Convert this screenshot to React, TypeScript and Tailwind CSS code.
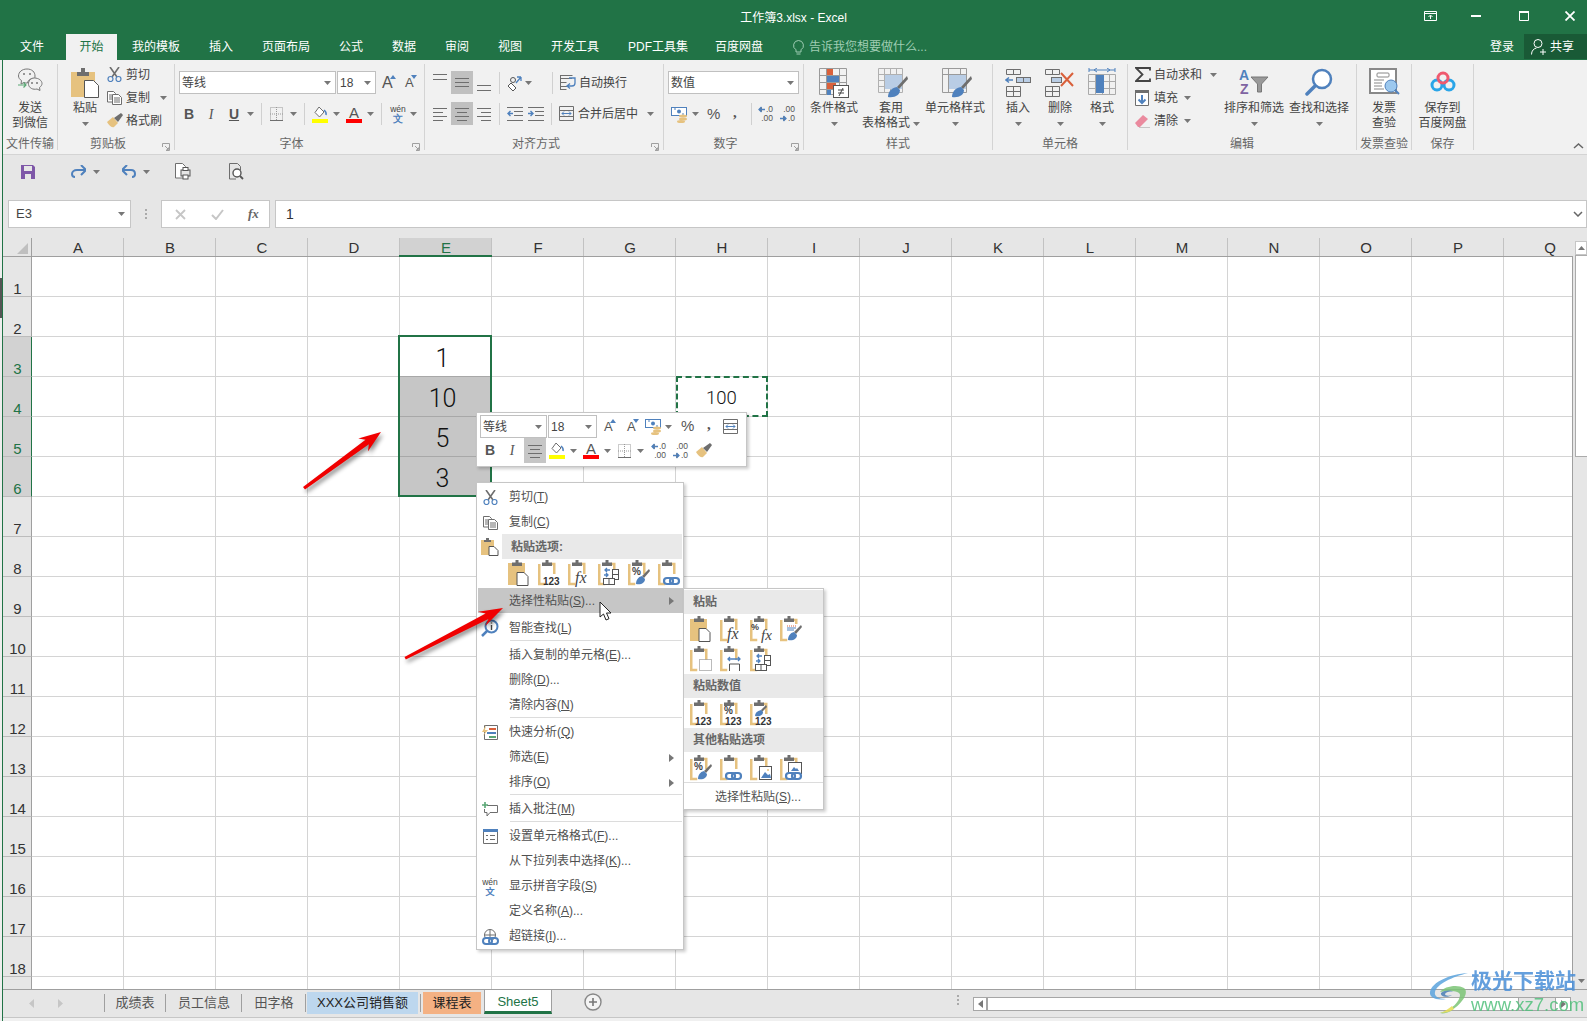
import React from "react";

const G = "#6e6e6e", B = "#4f81bd", T = "#e6c27f", O = "#d9603b", LB = "#b9cde5";

const S = ({ w, h, children, className = "" }: { w: number; h: number; children?: React.ReactNode; className?: string }) => (
  <svg width={w} height={h} viewBox={`0 0 ${w} ${h}`} fill="none" className={`shrink-0 ${className}`}>{children}</svg>
);

const Caret = ({ className = "" }: { className?: string }) => (
  <svg width="7" height="4" viewBox="0 0 7 4" className={`shrink-0 ${className}`}><path d="M0 0h7L3.5 4z" fill="#777" /></svg>
);
const VSep = ({ className = "" }: { className?: string }) => <div className={`w-[1px] h-[22px] bg-[#d0d0d0] shrink-0 ${className}`} />;

const Lines = ({ w, h, rows, className = "" }: { w: number; h: number; rows: [number, number, number][]; className?: string }) => (
  <S w={w} h={h} className={className}>{rows.map(([x1, x2, y], i) => <path key={i} d={`M${x1} ${y + 0.5}H${x2}`} stroke={G} />)}</S>
);

const FontUp = ({ small, up = true, className = "" }: { small?: boolean; up?: boolean; className?: string }) => (
  <span className={`relative flex shrink-0 items-end font-['Liberation_Sans'] text-[#555] ${small ? "text-[13px] w-[12px]" : "text-[16px] w-[14px]"} h-[18px] leading-[18px] ${className}`}>
    A
    <svg width="6" height="4" viewBox="0 0 6 4" className="absolute right-0 top-[1px]"><path d={up ? "M0 4h6L3 0z" : "M0 0h6L3 4z"} fill={B} /></svg>
  </span>
);

const Borders = ({ className = "" }: { className?: string }) => (
  <S w={13} h={14} className={className}><path d="M.5 .5h12v13H.5zM6.5 0v14M0 7h13" stroke="#999" strokeDasharray="1 1" /><path d="M0 13.5h13" stroke={G} /></S>
);
const Fill = ({ className = "" }: { className?: string }) => (
  <S w={16} h={17} className={className}>
    <path d="M7 1l5 5-4.500 5L3 6.500z" fill="#fff" stroke={G} /><path d="M12 4c2 1.500 2.500 3 2 5" stroke={B} strokeWidth="1.500" />
    <rect x="0" y="13" width="16" height="4" fill="#ffff00" />
  </S>
);
const FontColor = ({ className = "" }: { className?: string }) => (
  <span className={`flex flex-col items-center w-[16px] shrink-0 ${className}`}>
    <span className="font-['Liberation_Sans'] text-[15px] leading-[13px] h-[13px] text-[#555]">A</span>
    <span className="w-[16px] h-[4px] bg-[#ff0000]" />
  </span>
);
const Wen = ({ className = "" }: { className?: string }) => (
  <span className={`flex flex-col items-center w-[16px] shrink-0 leading-[9px] ${className}`}>
    <span className="text-[8.500px] text-[#444] font-['Liberation_Sans']">wén</span>
    <span className="text-[9.500px] text-[#4f81bd] font-bold">文</span>
  </span>
);
const Account = ({ className = "" }: { className?: string }) => (
  <S w={17} h={17} className={className}>
    <rect x=".5" y="1.500" width="15" height="8" fill="#fff" stroke={B} /><circle cx="8" cy="5.500" r="2" fill={B} />
    <path d="M3 3h2M11 8h2" stroke={B} />
    <ellipse cx="12" cy="10" rx="4" ry="1.500" fill={T} /><ellipse cx="12" cy="13" rx="4" ry="1.500" fill={T} /><ellipse cx="10" cy="15.500" rx="4" ry="1.500" fill={T} />
  </S>
);
const DecA = ({ className = "" }: { className?: string }) => (
  <span className={`relative flex flex-col items-end w-[15px] h-[18px] shrink-0 font-['Liberation_Sans'] text-[8.500px] leading-[8px] text-[#555] ${className}`}>
    <span>.0</span><span className="mt-[1px]">.00</span>
    <svg width="7" height="7" viewBox="0 0 7 7" className="absolute left-0 top-[1px]"><path d="M7 3.500H1M3.500 1L1 3.500 3.500 6" stroke={B} strokeWidth="1.300" /></svg>
  </span>
);
const DecB = ({ className = "" }: { className?: string }) => (
  <span className={`relative flex flex-col items-end w-[15px] h-[18px] shrink-0 font-['Liberation_Sans'] text-[8.500px] leading-[8px] text-[#555] ${className}`}>
    <span>.00</span><span className="mt-[1px]">.0</span>
    <svg width="7" height="7" viewBox="0 0 7 7" className="absolute left-0 bottom-[1px]"><path d="M0 3.500h6M3.500 1L6 3.500 3.500 6" stroke={B} strokeWidth="1.300" /></svg>
  </span>
);
const Brush = ({ className = "" }: { className?: string }) => (
  <S w={16} h={15} className={className}>
    <path d="M0 9l6-5 5 6-4 4c-3 1-5-2-7-5z" fill={T} /><path d="M7 5l7-5 2 2-5 7z" fill={G} />
  </S>
);
const Scissors = ({ className = "" }: { className?: string }) => (
  <S w={15} h={15} className={className}>
    <path d="M3 0l7 10M12 0L5 10" stroke={G} strokeWidth="1.600" />
    <circle cx="3.500" cy="12" r="2.500" stroke={B} strokeWidth="1.200" /><circle cx="11.500" cy="12" r="2.500" stroke={B} strokeWidth="1.200" />
  </S>
);
const Copy = ({ className = "" }: { className?: string }) => (
  <S w={15} h={14} className={className}>
    <path d="M.5 .5h6l2 2V11H.5z" fill="#fff" stroke={G} /><path d="M5.500 3.500h6l3 3v7h-9z" fill="#fff" stroke={G} />
    <path d="M7 7h6M7 9h6M7 11h6M2 4h3M2 6h3M2 8h3" stroke={G} />
  </S>
);
const MergeIcon = ({ className = "" }: { className?: string }) => (
  <S w={15} h={15} className={className}>
    <path d="M.5 .5h14v14H.5zM0 4.500h15M0 10.500h15" stroke={G} /><path d="M3 7.500h9M5 5.500l-2 2 2 2M10 5.500l2 2-2 2" stroke={B} />
  </S>
);
const WrapIcon = ({ className = "" }: { className?: string }) => (
  <S w={16} h={15} className={className}>
    <path d="M.5 .5h12M.5 7.500h6M.5 14.500h6M.5 0v15" stroke={G} /><path d="M1 3.500h11M1 11.500h6" stroke={G} />
    <path d="M9 3h6v5c0 2-1 3-3 3H8M10 8.500l-3 2.500 3 2.500" stroke={B} strokeWidth="1.300" />
  </S>
);
const Indent = ({ dir, className = "" }: { dir: number; className?: string }) => (
  <S w={16} h={14} className={className}>
    <path d="M0 .5h16M7 4.500h9M7 8.500h9M0 13.500h16" stroke={G} />
    <path d={dir < 0 ? "M6 6.500H1M3.500 4L1 6.500 3.500 9" : "M0 6.500h5M2.500 4L5 6.500 2.500 9"} stroke={B} strokeWidth="1.400" />
  </S>
);

/* clipboard family */
const Clip = ({ solid, children }: { solid?: boolean; children?: React.ReactNode }) => (
  <S w={22} h={26} className="overflow-visible -mt-[1px]">
    {solid ? <rect x="0" y="3" width="17" height="22" fill={T} /> : <path d="M1.250 4v20h6M13 4h3.250v10" stroke={T} strokeWidth="2.500" />}
    <path d="M4 2.500h3.500V0h3v2.500H14V6H4z" fill={G} />
    {children}
  </S>
);
const Page = () => <path d="M9 12.500h7l4 4v9H9z" fill="#fff" stroke="#555" />;
const N123 = () => <text x="5" y="25" fontSize="10" fontWeight="700" fill="#333" fontFamily="Liberation Sans">123</text>;
const Fx = ({ x = 7, y = 23, size = 16 }: { x?: number; y?: number; size?: number }) => <text x={x} y={y} fontSize={size} fontStyle="italic" fill="#444" fontFamily="Liberation Serif">fx</text>;
const Pct = ({ y = 15, x = 4, size = 10 }: { y?: number; x?: number; size?: number }) => <text x={x} y={y} fontSize={size} fontWeight="700" fill="#444" fontFamily="Liberation Sans">%</text>;
const SwapA = () => (
  <g><path d="M7 10h5M15 10h0M9 8l-2 2 2 2M6 15l4 0M8 13l2 2-2 2" stroke={B} strokeWidth="1.300" /><rect x="14.500" y="9.500" width="6" height="10" fill="#fff" stroke="#555" /><path d="M14.500 14.500h6" stroke="#555" /><rect x="5.500" y="18.500" width="11" height="6" fill="#fff" stroke="#555" /><path d="M11 18v7" stroke="#555" /></g>
);
const PBrush = () => <g><path d="M21 9l-7 7 2 2 6-7z" fill={G} /><path d="M8 24c0-4 2-7 6-8l3 3c0 4-4 6-9 5z" fill={B} /></g>;
const Link = () => <g stroke={B} strokeWidth="2.200"><rect x="6" y="18" width="9" height="6" rx="3" /><rect x="12" y="18" width="9" height="6" rx="3" /></g>;
const Pic = () => <g><rect x="9.500" y="11.500" width="12" height="13" fill="#fff" stroke="#555" /><path d="M11 23l4-6 3 3 2-1 1 4z" fill={B} /><circle cx="18" cy="15" r="1" fill={T} /></g>;
const Dots = () => <rect x="9.500" y="13.500" width="12" height="11" fill="#fff" stroke="#777" strokeDasharray="1 1" />;
const Cols = () => <g><path d="M8 13h12M10 11l-2 2 2 2M18 11l2 2-2 2" stroke={B} strokeWidth="1.300" /><path d="M9.500 25v-7h10v7" stroke="#555" /></g>;
const Notes = () => <g><rect x="6" y="8" width="12" height="9" fill="#fff" /><path d="M7 10h9" stroke="#d9603b" strokeDasharray="1 1" /><path d="M7 12h9M7 14h7" stroke={B} /></g>;

const Paste = {
  keep: <Clip solid><Page /></Clip>,
  val: <Clip><N123 /></Clip>,
  fx: <Clip><Fx /></Clip>,
  swap: <Clip><SwapA /></Clip>,
  pctb: <Clip><Pct /><PBrush /></Clip>,
  link: <Clip><Link /></Clip>,
  pctfx: <Clip><Pct x={1} y={14} size={9} /><Fx x={11} y={24} size={15} /></Clip>,
  note: <Clip><Notes /><PBrush /></Clip>,
  dots: <Clip><Dots /></Clip>,
  cols: <Clip><Cols /></Clip>,
  pv: <Clip><Pct y={14} /><N123 /></Clip>,
  bv: <Clip><path d="M16 5l-5 5 1 2 5-5z" fill={G} /><path d="M5 16c0-3 2-5 6-6l2 2c0 3-3 5-8 4z" fill={B} /><N123 /></Clip>,
  pic: <Clip><Pic /></Clip>,
  piclink: <Clip><rect x="8.500" y="7.500" width="13" height="11" fill="#fff" stroke="#555" /><path d="M11 16l3-4 2 2 1-1 2 3z" fill={B} /><Link /></Clip>,
};

const Big = ({ className = "", icon, lines, caret = true, inline }: { className?: string; icon: React.ReactNode; lines: string[]; caret?: boolean; inline?: boolean }) => (
  <div className={`flex flex-col items-center shrink-0 ${className}`}>
    <div className="h-[37px] pt-[4px] flex justify-center items-start">{icon}</div>
    {lines.map((l, i) => (
      <div key={i} className="h-[15px] leading-[15px] whitespace-nowrap flex items-center">
        {l}{inline && i === 1 && <Caret className="ml-[3px]" />}
      </div>
    ))}
    {lines.length === 1 && caret && <div className="h-[15px] flex items-center"><Caret /></div>}
  </div>
);

const Launcher = () => (
  <div className="w-[16px] flex items-start pl-[4px] pt-[8px]">
    <svg width="8" height="8" viewBox="0 0 8 8"><path d="M.5 4V.5H7.500V7.500H4M3 3l3 3M4.500 6.500h2v-2" stroke="#a0a0a0" fill="none" /></svg>
  </div>
);

const Group = ({ className, label, launcher, children }: { className: string; label: string; launcher?: boolean; children: React.ReactNode }) => (
  <div className={`flex flex-col my-[4px] border-r border-[#d4d4d4] shrink-0 ${className}`}>
    <div className="h-[71px] flex flex-col">{children}</div>
    <div className="h-[15px] flex text-[#666]">
      <div className="flex-1 text-center leading-[15px] mt-[2px] whitespace-nowrap">{label}</div>
      {launcher && <Launcher />}
    </div>
  </div>
);

const Select = ({ text, className = "", caretClass = "" }: { text: string; className?: string; caretClass?: string }) => (
  <div className={`bg-white border border-[#c0c0c0] flex items-center justify-between pl-[2px] pr-[4px] shrink-0 text-[#444] ${className}`}>
    <span>{text}</span><Caret className={caretClass} />
  </div>
);

const Small = ({ icon, text, after }: { icon: React.ReactNode; text: string; after?: React.ReactNode }) => (
  <div className="flex items-center h-[23px]">
    <div className="w-[19px] shrink-0 flex">{icon}</div>
    <span className="whitespace-nowrap">{text}</span>
    {after}
  </div>
);

const Tab = ({ t, className, active }: { t: string; className: string; active?: boolean }) => (
  <div className={`flex items-center justify-center shrink-0 whitespace-nowrap ${active ? "bg-[#f1f1f1] text-[#217346]" : "text-white"} ${className}`}>{t}</div>
);

const Title = () => (
  <div className="h-[60px] bg-[#217346] flex flex-col shrink-0">
    <div className="h-[34px] grid grid-cols-[1fr_auto_1fr] items-start text-white">
      <div />
      <div className="leading-[36px] text-[12px]">工作簿3.xlsx - Excel</div>
      <div className="flex justify-end items-center pr-[12px] h-[32px]">
        <S w={13} h={10}><path d="M.5 .5h12v9H.5zM0 2.500h13M6.500 8V4.500M4.500 6l2-2 2 2" stroke="#fff" /></S>
        <S w={10} h={2} className="ml-[34px]"><rect width="10" height="2" fill="#fff" /></S>
        <S w={10} h={10} className="ml-[38px]"><path d="M.5 .5h9v9h-9z" stroke="#fff" /><rect width="10" height="2" fill="#fff" /></S>
        <S w={10} h={10} className="ml-[36px]"><path d="M.5 .5l9 9M9.500 .5l-9 9" stroke="#fff" strokeWidth="1.800" /></S>
      </div>
    </div>
    <div className="h-[26px] flex">
      <Tab t="文件" className="w-[66px] pr-[2px]" />
      <Tab t="开始" className="w-[51px]" active />
      <Tab t="我的模板" className="w-[78px]" />
      <Tab t="插入" className="w-[52px]" />
      <Tab t="页面布局" className="w-[78px]" />
      <Tab t="公式" className="w-[52px]" />
      <Tab t="数据" className="w-[54px]" />
      <Tab t="审阅" className="w-[52px]" />
      <Tab t="视图" className="w-[54px]" />
      <Tab t="开发工具" className="w-[76px]" />
      <Tab t="PDF工具集" className="w-[90px]" />
      <Tab t="百度网盘" className="w-[72px]" />
      <S w={11} h={15} className="ml-[18px] mt-[6px]"><path d="M5.500 .5a5 5 0 0 1 2.500 9.300V12H3V9.800A5 5 0 0 1 5.500 .5zM3.500 14h4" stroke="#9fcdb3" /></S>
      <div className="ml-[5px] text-[#9fcdb3] leading-[26px]">告诉我您想要做什么...</div>
      <div className="ml-auto text-white leading-[26px]">登录</div>
      <div className="ml-[10px] w-[63px] h-[25px] bg-[#195a36] flex items-center pl-[7px] text-white">
        <S w={15} h={16}><circle cx="7" cy="4.500" r="4" stroke="#fff" /><path d="M.5 15.500c0-4 2.500-6 5-6.500M9 13h6M12 10v6" stroke="#fff" /></S>
        <span className="ml-[4px]">共享</span>
      </div>
    </div>
  </div>
);

const Ribbon = () => (
  <div className="h-[95px] flex bg-[#f1f1f1] border-b border-[#d4d4d4] shrink-0 text-[#444]">
    <Group className="w-[55px]" label="文件传输">
      <Big className="w-[54px]" caret={false} lines={["发送", "到微信"]} icon={
        <S w={25} h={23}>
          <path d="M9 1c5 0 8 3 8 7 0 1-.2 2-.6 2.600C13 10 10 12 9.500 15 8.500 15.200 7 15 6 14.500L3 16l.5-3.500C1.500 11.500 .5 9.500 .5 8 .5 4 4 1 9 1z" stroke="#777" />
          <path d="M16.500 10c4 0 7.500 2.500 7.500 5.500 0 1.500-1 3-2.500 4l.5 3-3-1.500c-4 1-8-1-8.500-4.500-.5-3.500 2.500-6.500 5.500-6.500z" fill="#f1f1f1" stroke="#777" />
          <circle cx="6" cy="6" r="1" fill="#777" /><circle cx="12" cy="6" r="1" fill="#777" /><circle cx="14" cy="15" r="1" fill="#777" /><circle cx="19" cy="15" r="1" fill="#777" />
          <path d="M0 17h8M5.500 14.500L8 17l-2.500 2.500" stroke="#5aa775" strokeWidth="1.200" />
        </S>
      } />
    </Group>
    <Group className="w-[117px]" label="剪贴板" launcher>
      <div className="flex">
        <Big className="w-[44px] ml-[5px]" lines={["粘贴"]} icon={
          <S w={28} h={30}>
            <rect x="0" y="4" width="24" height="25" fill={T} /><path d="M6 4h4V0h4v4h4v4H6z" fill={G} />
            <path d="M13.500 12.500h9l5 5v12h-14z" fill="#fff" stroke="#555" />
          </S>
        } />
        <div className="flex flex-col -mt-[1px]">
          <Small icon={<Scissors />} text="剪切" />
          <Small icon={<Copy />} text="复制" after={<Caret className="ml-[10px]" />} />
          <Small icon={<Brush />} text="格式刷" />
        </div>
      </div>
    </Group>
    <Group className="w-[250px]" label="字体" launcher>
      <div className="flex items-center h-[23px] mt-[7px]">
        <Select text="等线" className="w-[157px] h-[23px] ml-[4px]" />
        <Select text="18" className="w-[39px] h-[23px] ml-[1px]" />
        <FontUp className="ml-[6px]" />
        <FontUp small className="ml-[9px]" up={false} />
      </div>
      <div className="flex items-center h-[22px] mt-[9px] font-['Liberation_Sans']">
        <span className="w-[20px] ml-[4px] text-center font-bold text-[14px] text-[#555]">B</span>
        <span className="w-[20px] ml-[2px] text-center italic text-[14px] font-['Liberation_Serif'] text-[#555]">I</span>
        <span className="w-[20px] ml-[3px] text-center font-bold underline text-[14px] text-[#555]">U</span>
        <Caret className="ml-[3px]" />
        <VSep className="ml-[7px]" />
        <Borders className="ml-[8px]" />
        <Caret className="ml-[7px]" />
        <VSep className="ml-[7px]" />
        <Fill className="ml-[7px]" />
        <Caret className="ml-[5px]" />
        <FontColor className="ml-[6px]" />
        <Caret className="ml-[5px]" />
        <VSep className="ml-[7px]" />
        <Wen className="ml-[8px]" />
        <Caret className="ml-[4px]" />
      </div>
    </Group>
    <Group className="w-[239px]" label="对齐方式" launcher>
      <div className="flex items-center h-[23px] mt-[7px]">
        <Lines w={14} h={23} className="ml-[8px]" rows={[[0, 14, 3], [0, 14, 8]]} />
        <div className="w-[22px] h-[23px] ml-[4px] bg-[#c0c0c0] flex items-center justify-center"><Lines w={14} h={11} rows={[[0, 14, 1], [0, 14, 5], [0, 14, 9]]} /></div>
        <Lines w={14} h={23} className="ml-[4px]" rows={[[0, 14, 14], [0, 14, 19]]} />
        <VSep className="ml-[8px]" />
        <S w={16} h={17} className="ml-[7px]"><path d="M1 12l3-3 5 5-3 3z" fill="#fff" stroke="#555" /><circle cx="6" cy="6" r="2.500" stroke="#555" /><path d="M9 9l5-6M14 3h-4M14 3v4" stroke={B} strokeWidth="1.300" /></S>
        <Caret className="ml-[2px]" />
        <VSep className="ml-[20px]" />
        <WrapIcon className="ml-[7px]" />
        <span className="ml-[3px]">自动换行</span>
      </div>
      <div className="flex items-center h-[23px] mt-[8px]">
        <Lines w={14} h={14} className="ml-[8px]" rows={[[0, 14, 1], [0, 10, 5], [0, 14, 9], [0, 10, 13]]} />
        <div className="w-[22px] h-[23px] ml-[4px] bg-[#c0c0c0] flex items-center justify-center"><Lines w={14} h={14} rows={[[0, 14, 1], [2, 12, 5], [0, 14, 9], [2, 12, 13]]} /></div>
        <Lines w={14} h={14} className="ml-[4px]" rows={[[0, 14, 1], [4, 14, 5], [0, 14, 9], [4, 14, 13]]} />
        <VSep className="ml-[8px]" />
        <Indent dir={-1} className="ml-[7px]" />
        <Indent dir={1} className="ml-[5px]" />
        <VSep className="ml-[7px]" />
        <MergeIcon className="ml-[7px]" />
        <span className="ml-[4px]">合并后居中</span>
        <Caret className="ml-[9px]" />
      </div>
    </Group>
    <Group className="w-[140px]" label="数字" launcher>
      <div className="flex items-center h-[23px] mt-[7px]">
        <Select text="数值" className="w-[131px] h-[23px] ml-[4px]" />
      </div>
      <div className="flex items-center h-[22px] mt-[9px]">
        <Account className="ml-[7px]" />
        <Caret className="ml-[4px]" />
        <span className="ml-[8px] w-[13px] text-[15px] text-[#555] font-['Liberation_Sans']">%</span>
        <span className="ml-[13px] w-[5px] text-[15px] font-bold text-[#555] font-['Liberation_Serif'] -mt-[4px]">,</span>
        <VSep className="ml-[13px]" />
        <DecA className="ml-[6px]" />
        <DecB className="ml-[7px]" />
      </div>
    </Group>
    <Group className="w-[189px]" label="样式">
      <div className="flex">
        <Big className="w-[60px]" lines={["条件格式"]} icon={
          <S w={30} h={30}>
            <path d="M.5 .5h27v26H.5zM0 7.500h28M0 14.500h28M0 21.500h28M7.500 0v27M20.500 0v27" stroke="#9a9a9a" />
            <rect x="8" y="1" width="6" height="6" fill={O} /><rect x="8" y="8" width="12" height="6" fill={B} /><rect x="8" y="15" width="9" height="6" fill={O} /><rect x="8" y="22" width="4" height="5" fill={B} />
            <rect x="14.500" y="17.500" width="15" height="12" fill="#fff" stroke="#555" />
            <path d="M19 22h6M19 25h6M24 20l-4 8" stroke="#444" />
          </S>
        } />
        <Big className="w-[54px]" inline lines={["套用", "表格格式"]} icon={
          <S w={30} h={30} className="ml-[3px]">
            <path d="M.5 .5h24v24H.5zM0 6.500h25M0 12.500h25M0 18.500h25M6.500 0v25M12.500 0v25M18.500 0v25" stroke="#b0b0b0" />
            <rect x="7" y="7" width="17" height="14" fill={LB} />
            <path d="M29 8l-10 11 2 2 9-10z" fill={G} /><path d="M10 29c0-5 3-9 9-10l3 3c0 5-5 8-12 7z" fill={B} />
          </S>
        } />
        <Big className="w-[74px]" lines={["单元格样式"]} icon={
          <S w={30} h={30} className="ml-[3px]">
            <path d="M.5 .5h24v24H.5zM0 6.500h25M6.500 0v25M18.500 0v25" stroke="#9a9a9a" />
            <rect x="7" y="7" width="17" height="14" fill={LB} />
            <path d="M29 8l-10 11 2 2 9-10z" fill={G} /><path d="M10 29c0-5 3-9 9-10l3 3c0 5-5 8-12 7z" fill={B} />
          </S>
        } />
      </div>
    </Group>
    <Group className="w-[135px]" label="单元格">
      <div className="flex">
        <Big className="w-[50px]" lines={["插入"]} icon={
          <S w={27} h={30}>
            <path d="M1.500 1.500h14v5h-14zM8.500 1v6M1.500 18.500h14v10h-14zM8.500 18v11M1 23.500h15" stroke={G} />
            <rect x="11.500" y="9.500" width="14" height="5" fill={LB} stroke={G} /><path d="M18.500 9v6" stroke={G} />
            <path d="M8 12H1M4 9.500L1 12l3 2.500" stroke={B} strokeWidth="1.500" />
          </S>
        } />
        <Big className="w-[34px]" lines={["删除"]} icon={
          <S w={30} h={30}>
            <path d="M.5 1.500h14v5H.5zM7.500 1v6M.5 18.500h14v10H.5zM7.500 18v11M0 23.500h15" stroke={G} />
            <rect x="6.500" y="9.500" width="10" height="5" fill={LB} stroke={G} />
            <path d="M16 5l12 13M28 5L16 18" stroke={O} strokeWidth="2" />
          </S>
        } />
        <Big className="w-[50px]" lines={["格式"]} icon={
          <S w={29} h={30}>
            <path d="M1 2h26M1 0v4M27 0v4M6 2l3-2M6 2l3 2M22 2l-3-2M22 2l-3 2" stroke={B} />
            <path d="M.5 6.500h27v20H.5zM0 13.500h28M0 20.500h28M7.500 6v21M14.500 6v21M21.500 6v21" stroke="#aaa" />
            <rect x="8" y="7" width="8" height="18" fill={B} />
          </S>
        } />
      </div>
    </Group>
    <Group className="w-[229px]" label="编辑">
      <div className="flex">
        <div className="w-[96px] pl-[7px] flex flex-col shrink-0 -mt-[1px]">
          <Small text="自动求和" after={<Caret className="ml-[8px]" />} icon={<S w={16} h={15}><path d="M15 3.500V1H1l6.500 6.500L1 14h14v-2.500" stroke="#444" strokeWidth="1.800" /></S>} />
          <Small text="填充" after={<Caret className="ml-[6px]" />} icon={<S w={15} h={16}><path d="M.5 .5h13v15H.5z" fill="#fff" stroke={G} /><rect x="0" y="0" width="14" height="3" fill={G} /><path d="M7 5v8M3.500 9.500L7 13l3.500-3.500" stroke={B} strokeWidth="2" /></S>} />
          <Small text="清除" after={<Caret className="ml-[6px]" />} icon={<S w={15} h={14}><path d="M0 9l8-8 5 4-8 8H3z" fill="#ea8a9e" /><path d="M4 14h11" stroke="#999" /></S>} />
        </div>
        <Big className="w-[60px]" lines={["排序和筛选"]} icon={
          <S w={30} h={31}>
            <text x="0" y="12" fontSize="14" fontWeight="700" fill={B} fontFamily="Liberation Sans">A</text>
            <text x="1" y="26" fontSize="14" fontWeight="700" fill="#8064a2" fontFamily="Liberation Sans">Z</text>
            <path d="M12 9h17l-6.500 7v8h-4v-8z" fill="#999" stroke="#777" />
          </S>
        } />
        <Big className="w-[60px] ml-[5px]" lines={["查找和选择"]} icon={
          <S w={28} h={28}>
            <circle cx="17" cy="11" r="9" fill="#fff" stroke={B} strokeWidth="2.500" />
            <path d="M10 18L2 26" stroke={B} strokeWidth="3.500" strokeLinecap="round" />
          </S>
        } />
      </div>
    </Group>
    <Group className="w-[55px]" label="发票查验">
      <Big className="w-[54px]" caret={false} lines={["发票", "查验"]} icon={
        <S w={31} h={28}>
          <rect x="1" y="1" width="26" height="24" fill="#fff" stroke="#888" strokeWidth="2" />
          <rect x="8" y="5" width="12" height="4" rx="1" stroke="#888" /><path d="M5 12h10M5 15h8M5 18h8M5 21h10" stroke="#888" />
          <circle cx="22" cy="18" r="6" fill="#9cc8ee" stroke={B} /><path d="M26 22l4 4" stroke={B} strokeWidth="2" />
        </S>
      } />
    </Group>
    <Group className="w-[62px]" label="保存">
      <Big className="w-[61px]" caret={false} lines={["保存到", "百度网盘"]} icon={
        <S w={26} h={22} className="mt-[3px]">
          <circle cx="7" cy="14" r="5" stroke="#2aa5e8" strokeWidth="3" /><circle cx="19" cy="14" r="5" stroke="#2aa5e8" strokeWidth="3" />
          <circle cx="13" cy="7" r="5" stroke="#ef5a6f" strokeWidth="3" />
        </S>
      } />
    </Group>
    <svg width="11" height="6" viewBox="0 0 11 6" className="ml-auto mr-[3px] mt-[83px]"><path d="M1 5l4.500-4L10 5" stroke="#666" strokeWidth="1.500" fill="none" /></svg>
  </div>
);

const Quick = () => (
  <div className="h-[45px] flex items-center bg-[#e6e6e6] shrink-0 pb-[12px]">
    <S w={14} h={14} className="ml-[18px]"><path d="M0 0h12l2 2v12H0z" fill="#7e57a8" /><rect x="3" y="1" width="8" height="5" fill="#e6e6e6" /><rect x="4" y="9" width="6" height="5" fill="#e6e6e6" /></S>
    <S w={15} h={13} className="ml-[36px]"><path d="M14 5H6C3 5 1 7 1 9s1 3 3 3" stroke={B} strokeWidth="2" /><path d="M10 0l5 5-5 5" stroke={B} strokeWidth="2" /></S>
    <Caret className="ml-[7px]" />
    <S w={14} h={13} className="ml-[22px]"><path d="M1 5h8c3 0 4 2 4 4s-1 3-3 3" stroke={B} strokeWidth="2" /><path d="M5 0L0 5l5 5" stroke={B} strokeWidth="2" /></S>
    <Caret className="ml-[7px]" />
    <S w={16} h={17} className="ml-[25px]"><path d="M.5 .5h7l3 3V15H.5z" fill="#fff" stroke={G} /><rect x="6" y="7" width="9" height="6" fill="#e6e6e6" stroke="#555" /><rect x="8" y="4.500" width="5" height="3" fill="#fff" stroke="#555" /><rect x="8" y="12" width="5" height="4" fill="#fff" stroke="#555" /></S>
    <S w={15} h={17} className="ml-[38px]"><path d="M.5 .5h8l3 3V7M.5 .5V16H7" stroke={G} /><circle cx="8" cy="10" r="4" fill="#fff" stroke="#555" strokeWidth="1.400" /><path d="M11 13l3 3" stroke="#555" strokeWidth="1.800" /></S>
  </div>
);

const Formula = () => (
  <div className="h-[28px] flex items-stretch bg-[#e6e6e6] shrink-0">
    <div className="w-[123px] ml-[5px] bg-white border border-[#c6c6c6] flex items-center justify-between pl-[7px] pr-[5px] text-[13px] text-[#444]">E3<Caret /></div>
    <div className="flex flex-col gap-[2px] justify-center ml-[14px] w-[2px]">
      <span className="h-[2px] bg-[#aaa]" /><span className="h-[2px] bg-[#aaa]" /><span className="h-[2px] bg-[#aaa]" />
    </div>
    <div className="w-[109px] ml-[14px] bg-white border border-[#c6c6c6] flex items-center">
      <S w={11} h={11} className="ml-[13px]"><path d="M1 1l9 9M10 1l-9 9" stroke="#c6c6c6" strokeWidth="1.800" /></S>
      <S w={13} h={11} className="ml-[25px]"><path d="M1 6l4 4 7-9" stroke="#c6c6c6" strokeWidth="2" /></S>
      <span className="ml-[24px] italic font-['Liberation_Serif'] text-[13px] font-bold text-[#666]">fx</span>
    </div>
    <div className="flex-1 ml-[5px] bg-white border border-[#c6c6c6] flex items-center pl-[10px] pr-[3px] justify-between text-[14px] text-[#333]">
      1
      <svg width="10" height="6" viewBox="0 0 10 6"><path d="M1 1l4 4 4-4" stroke="#666" strokeWidth="1.500" fill="none" /></svg>
    </div>
  </div>
);

const COLS = "ABCDEFGHIJKLMNOPQ".split("");
const ROWS = Array.from({ length: 19 }, (_, i) => i + 1);

const ColumnHeader = () => (
  <div className="h-[19px] flex border-b border-[#9f9f9f] shrink-0 overflow-hidden">
    <div className="w-[29px] shrink-0 border-r border-[#9f9f9f] flex justify-end items-end pr-[3px] pb-[2px]">
      <svg width="11" height="11" viewBox="0 0 11 11"><path d="M11 0v11H0z" fill="#bfbfbf" /></svg>
    </div>
    {COLS.map((c) => (
      <div key={c} className={`w-[92px] shrink-0 border-r border-[#c2c2c2] text-center pl-[1px] text-[15px] leading-[20px] font-['Liberation_Sans'] ${c === "E" ? "bg-[#d2d2d2] text-[#217346]" : "text-[#333]"}`}>{c}</div>
    ))}
  </div>
);

const cellClass = (r: number, c: string) => {
  if (c === "E" && r >= 4 && r <= 6) return "bg-[#c6c6c6] border-b-[#a8a8a8] border-r-[#c6c6c6]";
  if (c === "E" && r === 3) return "bg-white border-b-[#a8a8a8] border-r-[#d4d4d4]";
  return "bg-white border-b-[#d4d4d4] border-r-[#d4d4d4]";
};
const values: Record<string, string> = { "E3": "1", "E4": "10", "E5": "5", "E6": "3" };

const Sheet = () => (
  <div className="flex-1 min-h-0 overflow-hidden border-r border-[#9f9f9f] font-['Roboto','Liberation_Sans']">
    {ROWS.map((r) => (
      <div key={r} className="flex h-[40px]">
        <div className={`w-[29px] shrink-0 border-b flex items-end justify-center pl-[1px] text-[15px] leading-[14px] font-['Liberation_Sans'] border-r ${r >= 3 && r <= 6 ? "bg-[#d2d2d2] text-[#217346] border-r-[#217346] border-b-[#bcbcbc]" : "text-[#333] border-r-[#9f9f9f] border-b-[#bcbcbc]"}`}>{r < 19 ? r : ""}</div>
        {COLS.map((c) => (
          <div key={c} className={`w-[92px] h-[40px] shrink-0 border-r border-b flex items-center justify-center font-light text-[#111] ${cellClass(r, c)} ${c === "E" ? "text-[25px] pr-[6px] pt-[4px]" : "text-[18.500px] pt-[5px]"}`}>{c === "H" && r === 4 ? "100" : values[c + r] ?? ""}</div>
        ))}
      </div>
    ))}
  </div>
);

const VScroll = () => (
  <div className="w-[12px] ml-[2px] flex flex-col mt-[3px] shrink-0">
    <div className="h-[14px] bg-white border border-[#c6c6c6] flex items-center justify-center"><svg width="7" height="4" viewBox="0 0 7 4"><path d="M0 4h7L3.500 0z" fill="#777" /></svg></div>
    <div className="h-[202px] bg-white border-y border-l border-[#ababab]" />
    <div className="flex-1" />
    <div className="h-[14px] flex items-center justify-center mb-[1px]"><Caret /></div>
  </div>
);

const SheetTab = ({ t, className }: { t: string; className: string }) => (
  <div className={`flex items-center justify-center shrink-0 h-[22px] mt-[2px] whitespace-nowrap text-[13px] ${className}`}>{t}</div>
);
const TabSep = ({ className = "" }: { className?: string }) => <div className={`w-[1px] h-[18px] mt-[4px] bg-[#9f9f9f] shrink-0 ${className}`} />;

const SheetBar = () => (
  <div className="h-[28px] border-t border-[#9f9f9f] flex items-start bg-[#e6e6e6] shrink-0 text-[#555]">
    <svg width="6" height="9" viewBox="0 0 6 9" className="ml-[26px] mt-[9px] shrink-0"><path d="M5 0v9L0 4.500z" fill="#c6c6c6" /></svg>
    <svg width="6" height="9" viewBox="0 0 6 9" className="ml-[23px] mt-[9px] shrink-0"><path d="M0 0v9l5-4.500z" fill="#c6c6c6" /></svg>
    <TabSep className="ml-[40px]" />
    <SheetTab t="成绩表" className="w-[60px]" />
    <TabSep className="mr-[1px]" />
    <SheetTab t="员工信息" className="w-[74px]" />
    <TabSep className="mr-[1px]" />
    <SheetTab t="田字格" className="w-[62px]" />
    <TabSep className="mr-[1px]" />
    <SheetTab t="XXX公司销售额" className="w-[111px] bg-[#bdd7ee] text-[#222]" />
    <TabSep className="ml-[2px]" />
    <SheetTab t="课程表" className="w-[58px] ml-[2px] bg-[#f4b183] text-[#222]" />
    <div className="w-[68px] ml-[3px] h-[24px] bg-white border-x border-[#9f9f9f] border-b-[3px] border-b-[#217346] text-[#217346] text-center leading-[24px] text-[13px] shrink-0">Sheet5</div>
    <S w={18} h={18} className="ml-[32px] mt-[3px]"><circle cx="9" cy="9" r="8" fill="#f4f4f4" stroke="#888" strokeWidth="1.400" /><path d="M9 5v8M5 9h8" stroke="#777" strokeWidth="1.600" /></S>
    <div className="ml-[355px] mt-[5px] flex flex-col gap-[2px] w-[2px] shrink-0">
      <span className="h-[2px] bg-[#aaa]" /><span className="h-[2px] bg-[#aaa]" /><span className="h-[2px] bg-[#aaa]" />
    </div>
    <div className="ml-[14px] mt-[7px] w-[598px] h-[14px] border border-[#a6a6a6] flex shrink-0">
      <div className="w-[14px] bg-white border-r-[2px] border-[#a6a6a6] flex items-center justify-center"><svg width="5" height="8" viewBox="0 0 5 8"><path d="M5 0v8L0 4z" fill="#777" /></svg></div>
      <div className="w-[531px] bg-white border-r border-[#a6a6a6]" />
      <div className="flex-1" />
      <div className="w-[15px] bg-white border-l border-[#a6a6a6] flex items-center justify-center"><svg width="5" height="8" viewBox="0 0 5 8"><path d="M0 0v8l5-4z" fill="#777" /></svg></div>
    </div>
  </div>
);

const Label = ({ text }: { text: string }) => {
  const m = text.match(/^(.*\()(.)(\).*)$/);
  if (!m) return <>{text}</>;
  return <>{m[1]}<u>{m[2]}</u>{m[3]}</>;
};

const Item = ({ text, icon, arrow, hi, flat, className = "" }: { text: string; icon?: React.ReactNode; arrow?: boolean; hi?: boolean; flat?: boolean; className?: string }) => (
  <div className={`h-[25px] flex items-center shrink-0 ${hi ? "bg-[#c6c6c6]" : ""} ${className}`}>
    <div className="w-[24px] flex justify-center shrink-0">{icon}</div>
    <span className={`block ml-[7px] whitespace-nowrap ${flat ? "" : "pb-[2px]"}`}><Label text={text} /></span>
    {arrow && <svg width="5" height="8" viewBox="0 0 5 8" className="ml-auto mr-[9px]"><path d="M0 0v8l5-4z" fill="#777" /></svg>}
  </div>
);
const MenuSep = ({ className = "" }: { className?: string }) => (
  <div className={`h-[3px] shrink-0 pl-[32px] pr-[1px] ${className}`}><div className="h-[1px] bg-[#dcdcdc]" /></div>
);
const Band = ({ t, className = "" }: { t: string; className?: string }) => (
  <div className={`h-[24px] bg-[#e9e9e9] flex items-center pl-[9px] font-bold text-[#666] shrink-0 ${className}`}>{t}</div>
);

const Menu = () => (
  <div className="absolute left-[476px] top-[482px] w-[208px] h-[468px] bg-white border border-[#c6c6c6] shadow-[2px_2px_3px_rgba(0,0,0,0.2)] flex flex-col pt-[2px] pl-[1px] text-[#505050]">
    <Item text="剪切(T)" icon={<Scissors />} />
    <Item text="复制(C)" icon={<Copy />} />
    <div className="flex h-[25px] -mt-[1px] shrink-0">
      <div className="w-[24px] flex justify-center items-center shrink-0">
        <S w={18} h={18}><rect x="0" y="2" width="13" height="15" fill={T} /><path d="M3 2h2V0h3v2h2v2H3z" fill={G} /><path d="M8 8.500h5l4 4v5H8z" fill="#fff" stroke="#555" /></S>
      </div>
      <div className="flex-1 bg-[#e9e9e9] flex items-center pl-[9px] font-bold text-[#666] mr-[1px]">粘贴选项:</div>
    </div>
    <div className="h-[29px] flex items-center pl-[30px] gap-[8px] shrink-0">
      {Paste.keep}{Paste.val}{Paste.fx}{Paste.swap}{Paste.pctb}{Paste.link}
    </div>
    <Item text="选择性粘贴(S)..." hi arrow flat />
    <Item text="智能查找(L)" className="mt-[2px]" flat icon={
      <S w={18} h={18}><circle cx="10.500" cy="7.500" r="6" stroke={B} strokeWidth="2" /><path d="M6 12l-5 5" stroke={B} strokeWidth="2.500" /><path d="M10.500 6v5M10.500 3.500v1" stroke="#444" strokeWidth="1.400" /></S>
    } />
    <MenuSep />
    <Item text="插入复制的单元格(E)..." />
    <Item text="删除(D)..." />
    <Item text="清除内容(N)" />
    <MenuSep className="-mt-[1px]" />
    <Item text="快速分析(Q)" icon={
      <S w={16} h={15}><path d="M2.500 .5h13v14H2.500z" fill="#fff" stroke={G} /><path d="M4 0L0 7h3L1 11l5-6H3z" fill={T} /><path d="M7 4h7" stroke={O} strokeWidth="2" /><path d="M5 8h9" stroke={B} strokeWidth="2" /><path d="M7 12h7" stroke="#5aa775" strokeWidth="2" /></S>
    } />
    <Item text="筛选(E)" arrow />
    <Item text="排序(O)" arrow />
    <MenuSep className="-mt-[1px]" />
    <Item text="插入批注(M)" icon={
      <S w={16} h={15}><path d="M5 3.500h10.500v7H8L5 14v-3.500H2.500V7" stroke={G} /><path d="M3 0v6M0 3h6" stroke="#5aa775" strokeWidth="1.600" /></S>
    } />
    <MenuSep className="-mt-[1px]" />
    <Item text="设置单元格格式(F)..." icon={
      <S w={15} h={15}><path d="M.5 .5h14v14H.5z" fill="#fff" stroke={G} /><rect width="15" height="3" fill={B} /><path d="M3 6.500h2M3 10.500h2M7 6.500h5M7 10.500h5" stroke={G} /></S>
    } />
    <Item text="从下拉列表中选择(K)..." />
    <Item text="显示拼音字段(S)" icon={<Wen />} />
    <Item text="定义名称(A)..." />
    <Item text="超链接(I)..." icon={
      <S w={17} h={16}><circle cx="8" cy="6" r="5.500" stroke={G} /><path d="M2.500 6h11M8 .5v11" stroke={G} /><g stroke={B} strokeWidth="2"><rect x="1" y="9" width="9" height="6" rx="3" fill="#fff" /><rect x="7" y="9" width="9" height="6" rx="3" /></g></S>
    } />
  </div>
);

const Sub = () => (
  <div className="absolute left-[683px] top-[588px] w-[141px] h-[222px] bg-white border border-[#c6c6c6] shadow-[2px_2px_3px_rgba(0,0,0,0.2)] flex flex-col text-[#505050]">
    <Band t="粘贴" className="mt-[1px]" />
    <div className="h-[25px] mt-[3px] flex pl-[6px] gap-[8px]">{Paste.keep}{Paste.fx}{Paste.pctfx}{Paste.note}</div>
    <div className="h-[25px] mt-[5px] flex pl-[6px] gap-[8px]">{Paste.dots}{Paste.cols}{Paste.swap}</div>
    <Band t="粘贴数值" className="mt-[2px]" />
    <div className="h-[25px] mt-[3px] flex pl-[6px] gap-[8px]">{Paste.val}{Paste.pv}{Paste.bv}</div>
    <Band t="其他粘贴选项" className="mt-[2px]" />
    <div className="h-[24px] mt-[4px] flex pl-[6px] gap-[8px]">{Paste.pctb}{Paste.link}{Paste.pic}{Paste.piclink}</div>
    <div className="h-[1px] mt-[2px] bg-[#dcdcdc] shrink-0" />
    <div className="flex-1 flex items-center pl-[31px] pt-[2px] whitespace-nowrap"><Label text="选择性粘贴(S)..." /></div>
  </div>
);

const Mini = () => (
  <div className="absolute left-[476px] top-[412px] w-[271px] h-[55px] bg-white border border-[#c6c6c6] shadow-[2px_2px_3px_rgba(0,0,0,0.2)] flex flex-col pt-[2px] pl-[1px] text-[#444]">
    <div className="flex items-center h-[23px]">
      <Select text="等线" className="w-[67px] h-[23px] ml-[2px]" />
      <Select text="18" className="w-[49px] h-[23px] ml-[1px]" />
      <FontUp small className="ml-[7px]" />
      <FontUp small className="ml-[11px]" up={false} />
      <Account className="ml-[6px]" />
      <Caret className="ml-[3px]" />
      <span className="ml-[9px] w-[13px] text-[15px] text-[#555] font-['Liberation_Sans']">%</span>
      <span className="ml-[13px] w-[5px] text-[15px] font-bold text-[#555] font-['Liberation_Serif'] -mt-[4px]">,</span>
      <MergeIcon className="ml-[11px]" />
    </div>
    <div className="flex items-center h-[25px]">
      <span className="w-[20px] ml-[2px] text-center font-bold text-[14px] text-[#555] font-['Liberation_Sans']">B</span>
      <span className="w-[20px] ml-[2px] text-center italic text-[14px] text-[#555] font-['Liberation_Serif']">I</span>
      <div className="w-[22px] h-[25px] ml-[2px] bg-[#c6c6c6] flex items-center justify-center"><Lines w={14} h={14} rows={[[0, 14, 1], [2, 12, 5], [0, 14, 9], [2, 12, 13]]} /></div>
      <Fill className="ml-[3px]" />
      <Caret className="ml-[5px]" />
      <FontColor className="ml-[6px]" />
      <Caret className="ml-[5px]" />
      <Borders className="ml-[7px]" />
      <Caret className="ml-[6px]" />
      <DecA className="ml-[7px]" />
      <DecB className="ml-[7px]" />
      <Brush className="ml-[8px]" />
    </div>
  </div>
);

const Arrow = ({ vb, w, h, left, top, pts }: { vb: string; w: string; h: string; left: string; top: string; pts: string }) => (
  <svg viewBox={vb} className={`absolute ${left} ${top} ${w} ${h} drop-shadow-[2px_3px_2px_rgba(0,0,0,0.45)]`}>
    <polygon points={pts} fill="#f00000" />
  </svg>
);

const Watermark = () => (
  <div className="absolute left-[1428px] top-[970px] w-[159px] h-[46px] flex opacity-85">
    <svg width="44" height="42" viewBox="0 0 44 42" className="shrink-0 mt-[2px]">
      <path d="M40 1C22 2 4 10 2 20c-1 5 6 9 16 7-8 0-12-3-11-7C9 12 24 5 40 1z" fill="#5ba4de" />
      <path d="M12 20c4-6 18-8 24-4 5 4 0 14-13 23-4 2-8 3-11 2 12-3 20-12 20-18 0-4-10-5-20-3z" fill="#7cc576" />
      <path d="M24 34c-4 3-8 6-12 7 4 0 10-1 14-4z" fill="#e6dc50" />
      <path d="M13 21c4-3 10-3 12-1-3-1-7 0-8 2 0 2 4 2 7 1-4 3-12 2-11-2z" fill="#4a7fb5" />
    </svg>
    <div className="flex flex-col ml-[-1px] -mt-[1px]">
      <span className="text-[21px] leading-[24px] font-bold text-[#4a8fd8] whitespace-nowrap">极光下载站</span>
      <span className="text-[18.500px] leading-[20px] mt-[2px] text-[#52c07c] whitespace-nowrap font-['Liberation_Sans']">www.xz7.com</span>
    </div>
  </div>
);

export default function App() {
  return (
    <div className="relative w-[1587px] h-[1021px] overflow-hidden bg-[#e6e6e6] flex flex-col text-[12px] font-['Liberation_Sans','Noto_Sans_CJK_SC',sans-serif]">
      <Title />
      <div className="flex-1 min-h-0 flex">
        <div className="w-[3px] shrink-0 border-r border-[#217346] bg-[#eeeeee] flex flex-col">
          <div className="h-[218px]" />
          <div className="h-[40px] bg-[#555]" />
        </div>
        <div className="flex-1 min-w-0 flex flex-col">
          <Ribbon />
          <Quick />
          <Formula />
          <div className="h-[10px] shrink-0" />
          <div className="flex-1 min-h-0 flex">
            <div className="w-[1570px] flex flex-col shrink-0">
              <ColumnHeader />
              <Sheet />
            </div>
            <VScroll />
          </div>
          <SheetBar />
          <div className="h-[4px] bg-[#f0f0f0] border-t border-[#c6c6c6] shrink-0" />
        </div>
      </div>

      <div className="absolute left-[398px] top-[335px] w-[94px] h-[162px] border-[2px] border-[#217346]" />
      <div className="absolute left-[399px] top-[255px] w-[93px] h-[2px] bg-[#217346]" />
      <div className="absolute left-[676px] top-[376px] w-[92px] h-[41px] border-[2px] border-dashed border-[#217346]" />

      <Arrow vb="295 425 95 75" w="w-[95px]" h="h-[75px]" left="left-[295px]" top="top-[425px]" pts="303,487 305,489.500 368.9,444.3 367.9,451.5 381,432 358.3,438.5 365.5,439.7" />

      <Mini />
      <Menu />
      <Sub />

      <Arrow vb="395 600 120 70" w="w-[120px]" h="h-[70px]" left="left-[395px]" top="top-[600px]" pts="404.500,657 405.800,659.500 488.400,618.900 485.200,626 503,608 478,611.800 485.600,613.500" />

      <svg width="14" height="20" viewBox="0 0 14 20" className="absolute left-[599px] top-[601px]">
        <path d="M1 1v15l3.500-3 2.500 6 3-1.300-2.500-5.700H12z" fill="#fff" stroke="#222" />
      </svg>

      <Watermark />
    </div>
  );
}
